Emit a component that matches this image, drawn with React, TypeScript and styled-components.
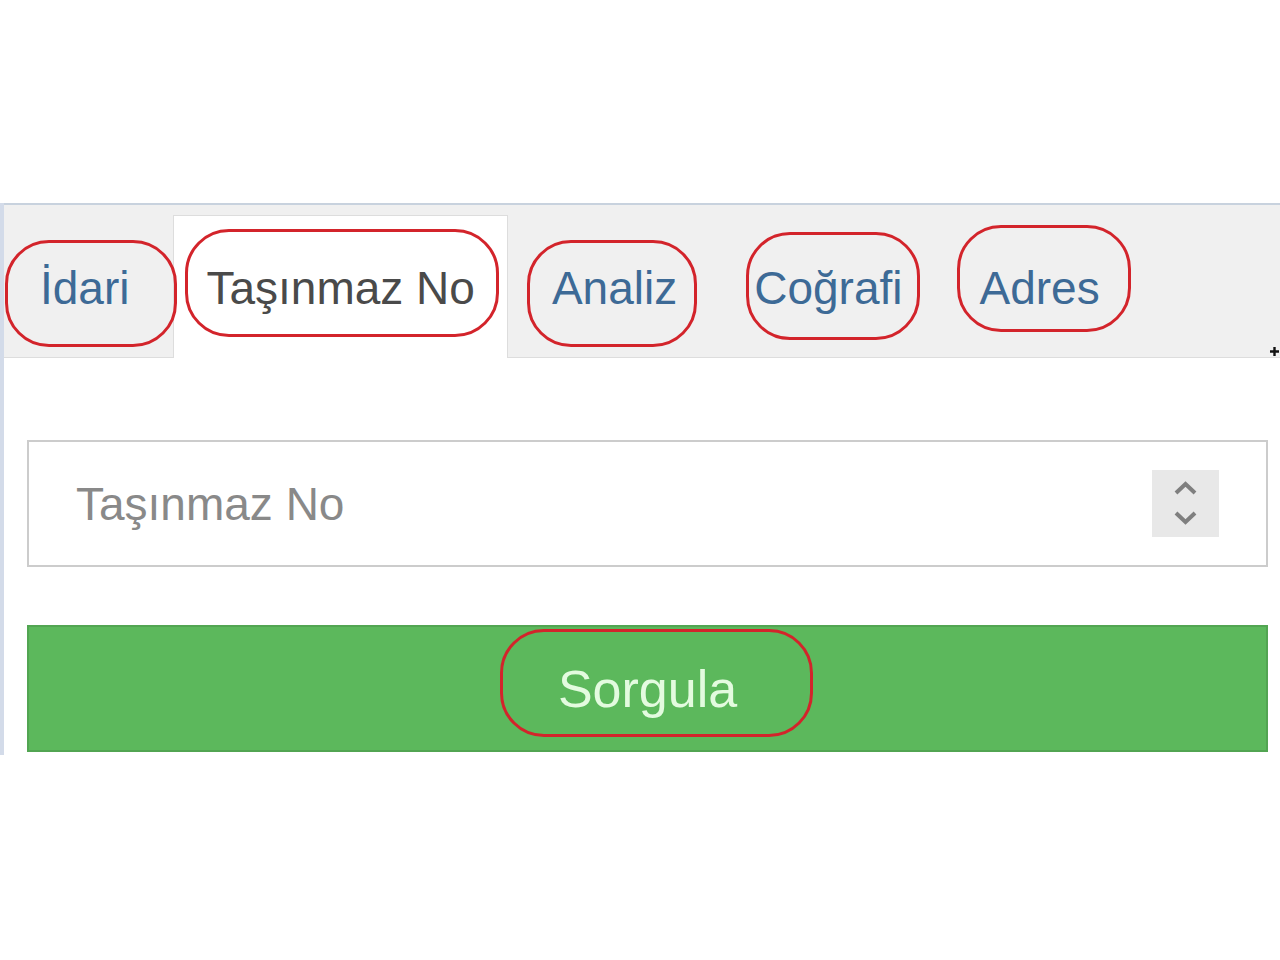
import React from "react";
import styled, { createGlobalStyle } from "styled-components";

const Global = createGlobalStyle`
  html, body { margin: 0; padding: 0; background: #ffffff; }
  body { font-family: "Liberation Sans", Arial, sans-serif; }
  * { box-sizing: border-box; }
`;

const Page = styled.div`
  width: 1280px;
  padding-top: 203px;
`;

const Panel = styled.div`
  width: 1280px;
  border-left: 4px solid #d3dbe9;
`;

const TabStrip = styled.div`
  display: flex;
  align-items: flex-end;
  height: 155px;
  padding-left: 3px;
  background: #f0f0f0;
  border-top: 2px solid #c8d2de;
  border-bottom: 1px solid #dddddd;
`;

const Tab = styled.div<{ $active?: boolean }>`
  display: flex;
  align-items: center;
  height: 143px;
  margin-bottom: -1px;
  margin-right: 11px;
  padding: 2px 32px 0;
  border: 1px solid ${(p) => (p.$active ? "#dddddd" : "transparent")};
  border-bottom: none;
  background: ${(p) => (p.$active ? "#ffffff" : "transparent")};
  color: ${(p) => (p.$active ? "#4a4a4a" : "#3d6a96")};
  font-size: 46px;
`;

const Label = styled.span<{ $lh: number }>`
  position: relative;
  display: inline-block;
  line-height: ${(p) => p.$lh}px;
  white-space: nowrap;
`;

const Oval = styled.span<{ $t: number; $r: number; $b: number; $l: number }>`
  position: absolute;
  top: ${(p) => p.$t}px;
  right: ${(p) => p.$r}px;
  bottom: ${(p) => p.$b}px;
  left: ${(p) => p.$l}px;
  border: 3px solid #d3242b;
  border-radius: 44px;
  pointer-events: none;
`;

const Cursor = styled.svg`
  margin-left: auto;
  margin-right: 1px;
  margin-bottom: 1px;
  align-self: flex-end;
`;

const Body = styled.div`
  display: flex;
  flex-direction: column;
  gap: 58px;
  padding: 82px 12px 3px 23px;
  background: #ffffff;
`;

const InputBox = styled.div`
  display: flex;
  align-items: center;
  height: 127px;
  padding: 0 47px;
  border: 2px solid #cccccc;
  background: #ffffff;
`;

const NumberInput = styled.input`
  flex: 1;
  min-width: 0;
  border: none;
  outline: none;
  background: transparent;
  padding: 0;
  font-family: "Liberation Sans", Arial, sans-serif;
  font-size: 46px;
  color: #555555;
  &::placeholder {
    color: #898989;
  }
`;

const Spinner = styled.div`
  width: 67px;
  height: 67px;
  background: #e8e8e8;
  display: flex;
  align-items: center;
  justify-content: center;
`;

const SubmitButton = styled.button`
  height: 127px;
  width: 100%;
  border: 2px solid #52a552;
  background: #5cb85c;
  color: #e3fbdf;
  font-family: "Liberation Sans", Arial, sans-serif;
  font-size: 52px;
  padding: 0;
  display: flex;
  align-items: center;
  justify-content: center;
  cursor: pointer;
`;

type TabDef = {
  text: string;
  active?: boolean;
  o: [number, number, number, number];
};

const tabs: TabDef[] = [
  { text: "İdari", o: [-22, -48, -32, -35] },
  { text: "Taşınmaz No", active: true, o: [-33, -24, -22, -21] },
  { text: "Analiz", o: [-22, -20, -32, -25] },
  { text: "Coğrafi", o: [-30, -17, -25, -8] },
  { text: "Adres", o: [-37, -31, -17, -23] },
];

export default function App() {
  return (
    <>
      <Global />
      <Page>
        <Panel>
          <TabStrip>
            {tabs.map((t) => (
              <Tab key={t.text} $active={t.active}>
                <Label $lh={53}>
                  {t.text}
                  <Oval $t={t.o[0]} $r={t.o[1]} $b={t.o[2]} $l={t.o[3]} />
                </Label>
              </Tab>
            ))}
            <Cursor width="9" height="9" viewBox="0 0 9 9">
              <path d="M4.5 0v9M0 4.5h9" stroke="#111" strokeWidth="2.4" />
            </Cursor>
          </TabStrip>
          <Body>
            <InputBox>
              <NumberInput placeholder="Taşınmaz No" />
              <Spinner>
                <svg width="67" height="67" viewBox="0 0 67 67">
                  <polyline
                    points="24,23 33.5,14 43,23"
                    fill="none"
                    stroke="#7f7f7f"
                    strokeWidth="4"
                  />
                  <polyline
                    points="24,43 33.5,52 43,43"
                    fill="none"
                    stroke="#7f7f7f"
                    strokeWidth="4"
                  />
                </svg>
              </Spinner>
            </InputBox>
            <SubmitButton type="button">
              <Label $lh={60}>
                Sorgula
                <Oval $t={-30} $r={-76} $b={-18} $l={-58} />
              </Label>
            </SubmitButton>
          </Body>
        </Panel>
      </Page>
    </>
  );
}
